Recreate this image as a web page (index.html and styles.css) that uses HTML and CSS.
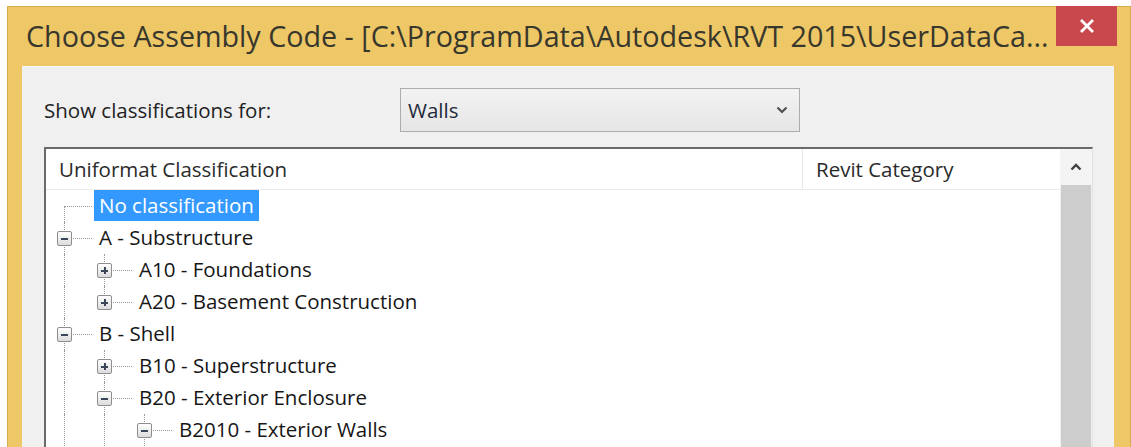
FILE: index.html
```html
<!DOCTYPE html>
<html lang="en">
<head>
<meta charset="utf-8">
<title>Choose Assembly Code</title>
<link rel="stylesheet" href="styles.css">
</head>
<body>
<div class="window">
  <div class="titlebar">
    <div class="title">Choose Assembly Code - [C:\ProgramData\Autodesk\RVT 2015\UserDataCa...</div>
    <button class="close" type="button" aria-label="Close">
      <svg width="16" height="16" viewBox="0 0 16 16"><path d="M3 3 L13 13 M13 3 L3 13" stroke="#fff" stroke-width="2.8" stroke-linecap="square" fill="none"/></svg>
    </button>
  </div>
  <div class="panel">
    <div class="filter">
      <label class="filter-label">Show classifications for:</label>
      <div class="combo">
        <span class="combo-value">Walls</span>
        <svg class="combo-arrow" width="12" height="8" viewBox="0 0 12 8"><path d="M1.5 1.5 L6 6 L10.5 1.5" stroke="#505050" stroke-width="2.2" fill="none"/></svg>
      </div>
    </div>
    <div class="list">
      <div class="list-body">
        <div class="header">
          <div class="col col-name">Uniformat Classification</div>
          <div class="col col-cat">Revit Category</div>
        </div>
        <div class="tree">
          <div class="row">
            <span class="node bot"></span>
            <span class="label selected">No classification</span>
          </div>
          <div class="row">
            <span class="node top bot"><i class="tw minus"></i></span>
            <span class="label">A - Substructure</span>
          </div>
          <div class="row">
            <span class="guide"></span>
            <span class="node top bot"><i class="tw plus"></i></span>
            <span class="label">A10 - Foundations</span>
          </div>
          <div class="row">
            <span class="guide"></span>
            <span class="node top"><i class="tw plus"></i></span>
            <span class="label">A20 - Basement Construction</span>
          </div>
          <div class="row">
            <span class="node top bot"><i class="tw minus"></i></span>
            <span class="label">B - Shell</span>
          </div>
          <div class="row">
            <span class="guide"></span>
            <span class="node top bot"><i class="tw plus"></i></span>
            <span class="label">B10 - Superstructure</span>
          </div>
          <div class="row">
            <span class="guide"></span>
            <span class="node top bot"><i class="tw minus"></i></span>
            <span class="label">B20 - Exterior Enclosure</span>
          </div>
          <div class="row">
            <span class="guide"></span>
            <span class="guide"></span>
            <span class="node top bot"><i class="tw minus"></i></span>
            <span class="label">B2010 - Exterior Walls</span>
          </div>
        </div>
      </div>
      <div class="scrollbar">
        <div class="scroll-btn">
          <svg width="12" height="8" viewBox="0 0 12 8"><path d="M1.5 6.5 L6 2 L10.5 6.5" stroke="#404040" stroke-width="2.4" fill="none"/></svg>
        </div>
        <div class="scroll-thumb"></div>
      </div>
    </div>
  </div>
</div>
</body>
</html>
```

FILE: styles.css
```css
html, body {
  margin: 0;
  padding: 0;
  background: #ffffff;
}

body {
  height: 447px;
  overflow: hidden;
  font-family: "Open Sans", "Noto Sans", sans-serif;
  color: #1c1c1c;
}

/* Window frame */
.window {
  margin: 6px 0 0 7px;
  width: 1122px;
  height: 460px;
  background: #eec766;
  border: 1px solid #d6ad4c;
  border-bottom: none;
  display: flex;
  flex-direction: column;
}

.titlebar {
  height: 59px;
  display: flex;
  align-items: flex-start;
  flex: none;
}

.title {
  flex: 1;
  padding-left: 18px;
  height: 58px;
  line-height: 58px;
  font-size: 28.7px;
  color: #38372d;
  white-space: nowrap;
  overflow: hidden;
}

.close {
  flex: none;
  width: 61px;
  height: 40px;
  margin: -1px 13px 0 0;
  padding: 0;
  border: none;
  background: #c9484e;
  display: flex;
  align-items: center;
  justify-content: center;
}

/* Dialog client area */
.panel {
  flex: 1;
  margin: 0 16px 0 14px;
  background: #f0f0f0;
  border-top: 1px solid #f7f7f7;
  padding: 21px 21px 0 22px;
}

.filter {
  display: flex;
  align-items: center;
  height: 44px;
}

.filter-label {
  width: 356px;
  font-size: 20.5px;
  color: #222;
  white-space: nowrap;
}

.combo {
  box-sizing: border-box;
  width: 400px;
  height: 44px;
  border: 1px solid #acacac;
  background: linear-gradient(#f2f2f2, #e6e6e6);
  display: flex;
  align-items: center;
  justify-content: space-between;
  padding: 0 11px 0 7px;
}

.combo-value {
  font-size: 20.5px;
  color: #1e2a3a;
}

/* List view */
.list {
  margin-top: 15px;
  height: 320px;
  border-top: 2px solid #6a6a6a;
  border-left: 2px solid #6a6a6a;
  border-right: 1px solid #e2e2e2;
  background: #ffffff;
  display: flex;
}

.list-body {
  flex: 1;
  display: flex;
  flex-direction: column;
}

.header {
  display: flex;
  height: 40px;
  border-bottom: 1px solid #eaeaea;
  font-size: 20.5px;
  color: #2a2a2a;
}

.col {
  line-height: 40px;
  white-space: nowrap;
}

.col-name {
  width: 743px;
  padding-left: 13px;
  border-right: 1px solid #e6e6e6;
}

.col-cat {
  flex: 1;
  padding-left: 13px;
}

.scrollbar {
  width: 32px;
  background: #f0f0f0;
  display: flex;
  flex-direction: column;
}

.scroll-btn {
  height: 36px;
  display: flex;
  align-items: center;
  justify-content: center;
  background: #f4f4f4;
}

.scroll-thumb {
  flex: 1;
  margin: 0 1px;
  background: #cdcdcd;
}

/* Tree rows */
.tree {
  font-size: 20.5px;
}

.row {
  display: flex;
  height: 32px;
  align-items: flex-start;
}

.guide,
.node {
  position: relative;
  flex: none;
  height: 32px;
}

.guide {
  width: 40px;
}

.node {
  width: 48px;
}

.guide::before {
  content: "";
  position: absolute;
  left: 18px;
  top: 0;
  height: 32px;
  border-left: 1px dotted #9a9a9a;
}

/* horizontal connector from the trunk to the label */
.node::after {
  content: "";
  position: absolute;
  left: 19px;
  top: 16px;
  width: 27px;
  border-top: 1px dotted #9a9a9a;
}

.node.top::before,
.node.bot::before {
  content: "";
  position: absolute;
  left: 18px;
  border-left: 1px dotted #9a9a9a;
}

.node.top::before { top: 0; height: 16px; }
.node.bot::before { top: 16px; height: 16px; }
.node.top.bot::before { top: 0; height: 32px; }

/* expand / collapse box */
.tw {
  position: absolute;
  left: 11px;
  top: 9px;
  width: 13px;
  height: 13px;
  border: 1px solid #8e8e8e;
  border-radius: 2px;
  background: linear-gradient(#ffffff, #dcdcdc);
  z-index: 1;
}

.tw::before {
  content: "";
  position: absolute;
  left: 3px;
  top: 5.5px;
  width: 7px;
  height: 2px;
  background: #3a4658;
}

.tw.plus::after {
  content: "";
  position: absolute;
  left: 5.5px;
  top: 3px;
  width: 2px;
  height: 7px;
  background: #3a4658;
}

.label {
  height: 31px;
  line-height: 31px;
  padding: 0 5px;
  white-space: nowrap;
  color: #161616;
}

.label.selected {
  background: #3399ff;
  color: #ffffff;
}
```
